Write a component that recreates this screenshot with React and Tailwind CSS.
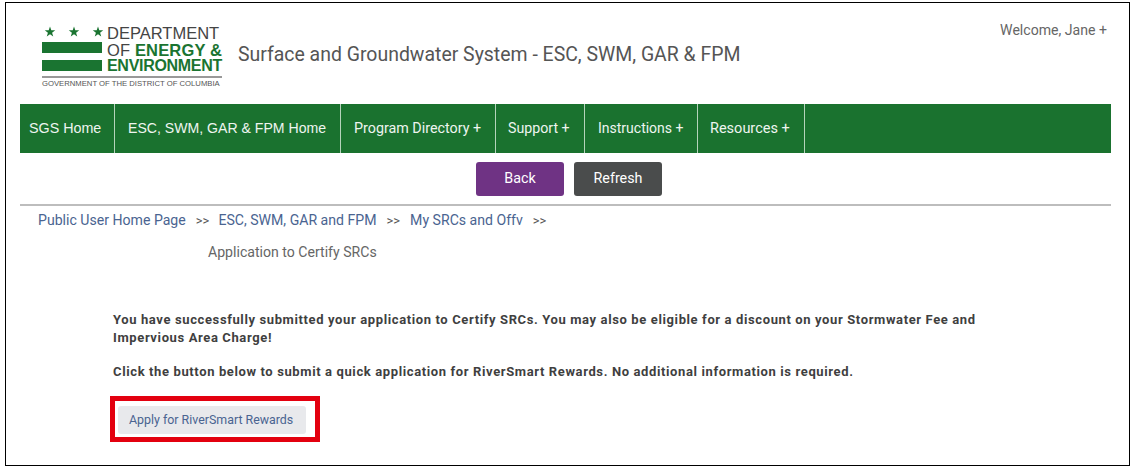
const NAV = [
  { label: "SGS Home", className: "w-[95px] pl-[9px] font-['Liberation_Sans',sans-serif] text-[14.3px]" },
  { label: "ESC, SWM, GAR & FPM Home", className: "w-[226px] pl-[13px] font-['Liberation_Sans',sans-serif] text-[14.1px]" },
  { label: "Program Directory +", className: "w-[155px] pl-[13px] text-[14.3px]" },
  { label: "Support +", className: "w-[89px] pl-[12px] text-[14.2px]" },
  { label: "Instructions +", className: "w-[113px] pl-[13px] text-[14px]" },
  { label: "Resources +", className: "w-[107px] pl-[12px] text-[14.5px]" },
];

const STAR_X = [8, 32, 56];

function Logo() {
  return (
    <div className="w-[180px] shrink-0">
      <div className="flex h-[50px]">
        <div className="flex w-[65px] shrink-0 flex-col">
          <svg width="64" height="15" viewBox="0 0 64 15" className="text-[#1a7431]">
            {STAR_X.map((x) => (
              <g key={x} transform={`translate(${x} 7)`}>
                <polygon
                  fill="currentColor"
                  points="0,-5.5 1.29,-1.78 5.23,-1.7 2.09,0.68 3.23,4.45 0,2.2 -3.23,4.45 -2.09,0.68 -5.23,-1.7 -1.29,-1.78"
                />
              </g>
            ))}
          </svg>
          <div className="mt-[2px] h-[11px] w-[60px] bg-[#1a7431]" />
          <div className="mt-[7px] h-[11px] w-[60px] bg-[#1a7431]" />
        </div>
        <div className="font-['Liberation_Sans',sans-serif] text-[16.5px] leading-[16.5px] whitespace-nowrap text-[#444]">
          <div>DEPARTMENT</div>
          <div className="tracking-[0.15px]">
            OF <span className="font-bold text-[#1a7431]">ENERGY &amp;</span>
          </div>
          <div className="text-[16px] font-bold tracking-[-0.3px] text-[#1a7431]">ENVIRONMENT</div>
        </div>
      </div>
      <div className="mt-[1px] border-t-2 border-[#999] pt-[2px] font-['Liberation_Sans',sans-serif] text-[7.7px] leading-[8px] whitespace-nowrap text-[#555]">
        GOVERNMENT OF THE DISTRICT OF COLUMBIA
      </div>
    </div>
  );
}

export default function App() {
  return (
    <div className="h-[471px] w-[1135px] bg-white pt-[2px] pl-[5px] font-['Roboto',sans-serif]">
      <div className="flex h-[464px] w-[1125px] flex-col border border-black pr-[18px] pl-[14px]">
        <div className="flex h-[101px] items-start">
          <div className="mt-[22px] ml-[22px]">
            <Logo />
          </div>
          <div className="mt-[40px] ml-[16px] text-[19.45px] leading-[24px] whitespace-nowrap text-[#555]">
            Surface and Groundwater System - ESC, SWM, GAR &amp; FPM
          </div>
          <div className="mt-[18px] mr-[4px] ml-auto text-[14.1px] leading-[18px] text-[#666]">Welcome, Jane +</div>
        </div>

        <div className="flex h-[49px] bg-[#1a722f]">
          {NAV.map((item) => (
            <div
              key={item.label}
              className={`flex items-center border-r border-[#b5d3bb] whitespace-nowrap text-[#eef5ef] ${item.className}`}
            >
              {item.label}
            </div>
          ))}
        </div>

        <div className="mt-[9px] flex justify-center gap-[10px] pl-[7px]">
          <div className="flex h-[34px] w-[88px] items-center justify-center rounded-[3px] bg-[#6f3384] pb-[1px] text-[14.3px] text-white">Back</div>
          <div className="flex h-[34px] w-[88px] items-center justify-center rounded-[3px] bg-[#4a4c4c] pb-[1px] text-[14.3px] text-white">Refresh</div>
        </div>

        <div className="mt-[8px] border-t-2 border-[#bdbdbd] pt-[4px] pl-[18px] text-[14.1px] leading-[20px] text-[#4a6491]">
          <span>Public User Home Page</span>
          <span className="mr-[9px] ml-[10px] text-[13px] text-[#555]">&gt;&gt;</span>
          <span>ESC, SWM, GAR and FPM</span>
          <span className="mx-[10px] text-[13px] text-[#555]">&gt;&gt;</span>
          <span>My SRCs and Offv</span>
          <span className="mx-[10px] text-[13px] text-[#555]">&gt;&gt;</span>
        </div>
        <div className="mt-[11px] pl-[188px] text-[14.1px] leading-[20px] text-[#666]">Application to Certify SRCs</div>

        <div className="mt-[49px] pl-[93px] text-[13px] leading-[18px] font-bold tracking-[0.62px] text-[#3f3f3f]">
          <p className="w-[900px]">
            You have successfully submitted your application to Certify SRCs. You may also be eligible for a discount on your Stormwater Fee and Impervious Area Charge!
          </p>
          <p className="mt-[16px] w-[900px]">
            Click the button below to submit a quick application for RiverSmart Rewards. No additional information is required.
          </p>
        </div>

        <div className="mt-[15px] ml-[90px] flex h-[46px] w-[210px] items-center border-[5px] border-[#e3000f] pt-[1px] pl-[3px]">
          <div className="flex h-[28px] w-[188px] items-center rounded-[3px] bg-[#e8e9ec] pt-[1px] pl-[11px] text-[12.4px] whitespace-nowrap text-[#4a6491]">
            Apply for RiverSmart Rewards
          </div>
        </div>
      </div>
    </div>
  );
}
